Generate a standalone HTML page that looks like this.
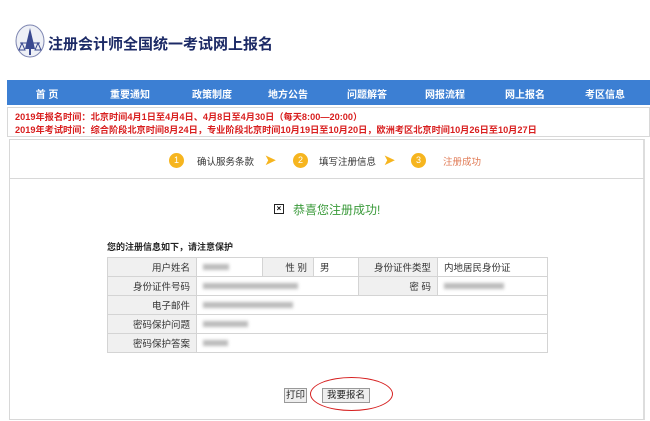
<!DOCTYPE html>
<html><head><meta charset="utf-8"><style>
*{margin:0;padding:0;box-sizing:border-box}
body{width:650px;height:421px;background:#fff;font-family:"Liberation Sans","Noto Sans CJK SC",sans-serif;position:relative;overflow:hidden}
.a{position:absolute;white-space:nowrap}
.nav{left:7px;top:80px;width:643px;height:25px;background:#3c7fd3}
.nav span{position:absolute;top:6px;color:#fff;font-size:10px;font-weight:bold;transform:translateX(-50%)}
.notice{left:7px;top:107px;width:643px;height:30px;border:1px solid #d8d8d8}
.notice div{color:#d81e1e;font-size:9.2px;font-weight:bold;position:absolute;left:7px}
.box{left:9px;top:139px;width:636px;height:281px;border:1px solid #d8d8d8;border-right:2px solid #ddd}
.circ{width:15px;height:15px;border-radius:50%;background:#f6b51f;color:#fff;font-size:9px;text-align:center;line-height:15px}
.st{font-size:9.5px;color:#333;top:154px}
table{position:absolute;left:107px;top:257px;width:441px;border-collapse:collapse;font-size:9.5px;color:#333}
td{border:1px solid #d4d4d4;height:19px;padding:0 6px}
td.l{background:#f0f0f0;text-align:right}
.bl{display:inline-block;height:6px;background:#bbb;filter:blur(1.5px);vertical-align:middle}
.btn{border:1px solid #999;background:#eee;font-size:9.5px;color:#222;text-align:center;line-height:13px;height:15px}
</style></head><body>
<svg class="a" style="left:14px;top:23px" width="32" height="38" viewBox="0 0 32 38">
<ellipse cx="16" cy="18" rx="14" ry="16" fill="#eef0f6" stroke="#7c84b0" stroke-width="1"/>
<path d="M16 5 L11 26 L21 26 Z" fill="#3b4a90"/>
<path d="M6 20 L26 20 M8 20 L5 27 L11 27 Z M24 20 L21 27 L27 27 Z" stroke="#3b4a90" fill="none" stroke-width="1"/>
<path d="M16 26 L16 32" stroke="#3b4a90" stroke-width="2"/>
</svg>
<div class="a" style="left:48px;top:33px;font-size:15px;font-weight:bold;color:#1c2a66">注册会计师全国统一考试网上报名</div>
<div class="a nav">
<span style="left:40px">首 页</span><span style="left:123px">重要通知</span><span style="left:205px">政策制度</span><span style="left:281px">地方公告</span><span style="left:360px">问题解答</span><span style="left:438px">网报流程</span><span style="left:518px">网上报名</span><span style="left:598px">考区信息</span>
</div>
<div class="a notice"><div style="top:1px">2019年报名时间：北京时间4月1日至4月4日、4月8日至4月30日（每天8:00—20:00）</div><div style="top:14px">2019年考试时间：综合阶段北京时间8月24日，专业阶段北京时间10月19日至10月20日，欧洲考区北京时间10月26日至10月27日</div></div>
<div class="a box"></div>
<div class="a" style="left:10px;top:178px;width:634px;height:1px;background:#d8d8d8"></div>
<div class="a circ" style="left:169px;top:153px">1</div>
<div class="a st" style="left:197px">确认服务条款</div>
<div class="a" style="left:264px;top:151px;color:#f6b51f;font-size:15px">➤</div>
<div class="a circ" style="left:293px;top:153px">2</div>
<div class="a st" style="left:319px">填写注册信息</div>
<div class="a" style="left:383px;top:151px;color:#f6b51f;font-size:15px">➤</div>
<div class="a circ" style="left:411px;top:153px">3</div>
<div class="a st" style="left:443px;color:#e07a55">注册成功</div>
<div class="a" style="left:274px;top:204px;width:10px;height:10px;border:1px solid #222;font-size:8px;line-height:8px;text-align:center;font-weight:bold">×</div>
<div class="a" style="left:293px;top:201px;font-size:12px;color:#3a9a3a">恭喜您注册成功!</div>
<div class="a" style="left:107px;top:240px;font-size:9px;font-weight:bold;color:#222">您的注册信息如下，请注意保护</div>
<table>
<tr><td class="l" style="width:89px">用户姓名</td><td style="width:66px"><span class="bl" style="width:26px"></span></td><td class="l" style="width:51px">性 别</td><td style="width:45px">男</td><td class="l" style="width:79px">身份证件类型</td><td>内地居民身份证</td></tr>
<tr><td class="l">身份证件号码</td><td colspan="3"><span class="bl" style="width:95px"></span></td><td class="l">密 码</td><td><span class="bl" style="width:60px"></span></td></tr>
<tr><td class="l">电子邮件</td><td colspan="5"><span class="bl" style="width:90px"></span></td></tr>
<tr><td class="l">密码保护问题</td><td colspan="5"><span class="bl" style="width:45px"></span></td></tr>
<tr><td class="l">密码保护答案</td><td colspan="5"><span class="bl" style="width:25px"></span></td></tr>
</table>
<div class="a btn" style="left:284px;top:388px;width:23px">打印</div>
<div class="a btn" style="left:322px;top:388px;width:48px">我要报名</div>
<div class="a" style="left:310px;top:377px;width:83px;height:34px;border:1.5px solid #d62020;border-radius:50%"></div>
</body></html>
